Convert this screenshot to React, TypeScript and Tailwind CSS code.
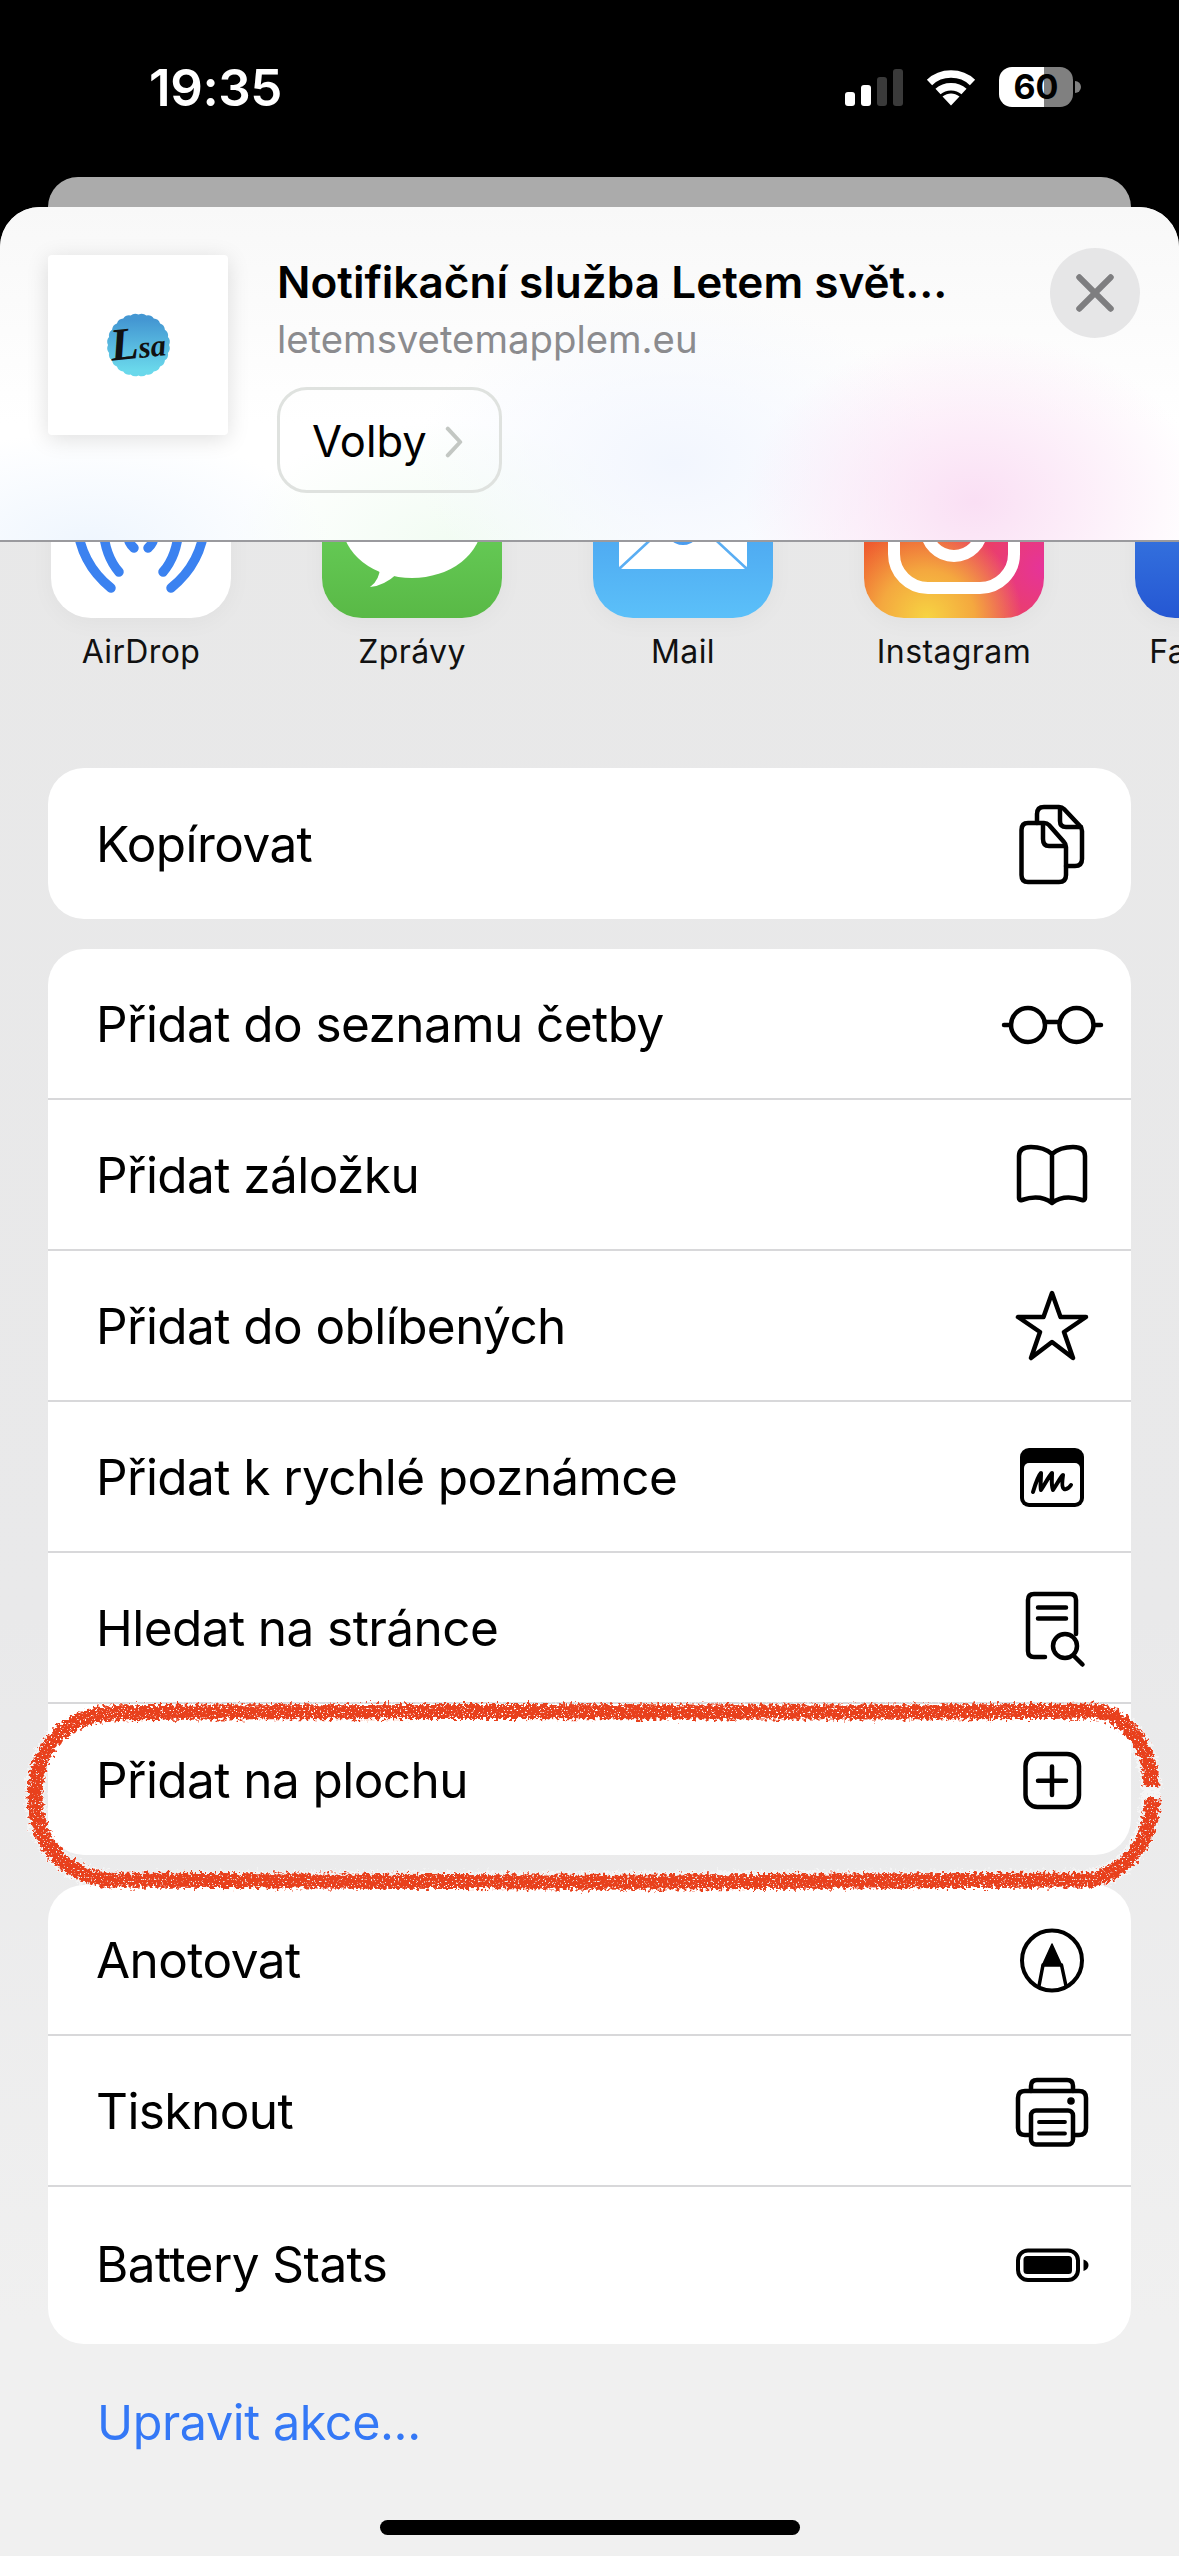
import React from "react";

const sans = "font-['Inter','Noto_Sans',sans-serif]";

function scallop(cx: number, cy: number, r: number, n: number) {
  let d = "";
  for (let i = 0; i < n; i++) {
    const a = (i / n) * Math.PI * 2;
    const b = ((i + 0.5) / n) * Math.PI * 2;
    const c = ((i + 1) / n) * Math.PI * 2;
    const p = (t: number, q: number) => `${(cx + Math.cos(t) * q).toFixed(2)} ${(cy + Math.sin(t) * q).toFixed(2)}`;
    d += (i === 0 ? `M${p(a, r)}` : "") + `Q${p(b, r + 2.4)} ${p(c, r)}`;
  }
  return d + "Z";
}

const Ico = ({ children }: { children: React.ReactNode }) => (
  <svg viewBox="0 0 80 80" className="w-[80px] h-[80px] overflow-visible shrink-0" fill="none" stroke="#000" strokeWidth="4.5" strokeLinecap="round" strokeLinejoin="round">
    {children}
  </svg>
);

const icons = {
  copy: (
    <Ico>
      <path d="M25 18V9Q25 2 32 2H47Q50 2 52 4L68 21Q70 23 70 26V54Q70 61 63 61H54" />
      <path d="M48 3V16Q48 22 54 22H69" />
      <path d="M16 18H32Q35 18 37 20L52 37Q54 39 54 42V70Q54 77 47 77H16Q9.5 77 9.5 70V25Q9.5 18 16 18Z" />
      <path d="M31 19V34Q31 41 37 41H53" />
    </Ico>
  ),
  glasses: (
    <Ico>
      <circle cx="16" cy="40" r="17" />
      <circle cx="64.5" cy="40" r="17" />
      <path d="M33 37H47.5M-8 40H-1M82 40H89" />
    </Ico>
  ),
  book: (
    <Ico>
      <path d="M40 18Q32 11 19 11Q7 11 7 20V62Q7 65 10 64Q28 58 40 67Q52 58 70 64Q73 65 73 62V20Q73 11 61 11Q48 11 40 18V67" />
    </Ico>
  ),
  star: (
    <Ico>
      <path d="M40 6L48.5 30H74L52 45L61 71L40 55L19 71L28 45L6 30H31.5Z" />
    </Ico>
  ),
  note: (
    <Ico>
      <rect x="8" y="10" width="64" height="59" rx="9" fill="#000" stroke="none" />
      <rect x="12" y="25" width="56" height="40" rx="5" fill="#fff" stroke="none" />
      <path strokeWidth="4" d="M21 54C24 44 27 37 29 35C29 42 28 48 29 52C33 46 37 38 40 35C40 42 39 47 41 52C45 46 48 40 51 37C50 44 50 50 52 51C55 52 57 50 59 47" />
    </Ico>
  ),
  search: (
    <Ico>
      <path d="M64 45V11Q64 5 58 5H22Q16 5 16 11V62Q16 68 22 68H33" />
      <path d="M26 18.5H54M26 29.5H54" />
      <circle cx="53" cy="57" r="12" />
      <path d="M62 67L70.5 75.5" />
    </Ico>
  ),
  plus: (
    <Ico>
      <rect x="13.5" y="13" width="53.5" height="53" rx="12" />
      <path d="M26 39.7H54M40 25.5V54" />
    </Ico>
  ),
  annotate: (
    <Ico>
      <circle cx="40" cy="39.5" r="30" strokeWidth="4" />
      <path d="M40 23L50 45H30Z" fill="#000" stroke="#000" strokeWidth="1.5" />
      <path strokeWidth="3.5" d="M31 44L27 65M49.5 44L54 65" />
    </Ico>
  ),
  print: (
    <Ico>
      <path d="M18 63H13Q6 63 6 56V26Q6 19 13 19H67Q74 19 74 26V56Q74 63 67 63H62" />
      <path d="M19 19V14Q19 8 25 8H55Q61 8 61 14V19" />
      <rect x="19" y="38.5" width="42" height="34" rx="5" />
      <path strokeWidth="3.8" d="M27 50H53M27 61.5H53" />
      <circle cx="59" cy="29" r="3.8" fill="#000" stroke="none" />
    </Ico>
  ),
  battery: (
    <Ico>
      <rect x="6" y="25.5" width="60" height="29.5" rx="10" strokeWidth="4" />
      <rect x="11.5" y="31" width="48.5" height="18" rx="3.5" fill="#000" stroke="none" />
      <path d="M71.5 34.5Q76.5 36 76.5 40Q76.5 44.5 71.5 46Z" fill="#000" stroke="none" />
    </Ico>
  ),
};

const Row = ({ label, icon, last, tall }: { label: string; icon: React.ReactNode; last?: boolean; tall?: boolean }) => (
  <div className={`flex items-center justify-between pl-[48px] pr-[39px] ${tall ? "h-[157px] pb-[2px]" : "h-[151px] pt-[3px]"} ${last ? "" : "border-b-2 border-[#d8d8da]"}`}>
    <span className="text-[49.5px] tracking-[-0.57px] text-black leading-none">{label}</span>
    {icon}
  </div>
);

const Group = ({ children, cls }: { children: React.ReactNode; cls: string }) => (
  <div className={`mx-[48px] bg-white rounded-[36px] overflow-hidden ${cls}`}>{children}</div>
);

const App_ = ({ label, children, cls }: { label: string; children?: React.ReactNode; cls: string }) => (
  <div className="flex flex-col items-center w-[180px] shrink-0">
    <div className={`w-[180px] h-[180px] rounded-[40px] overflow-hidden shadow-[0_4px_24px_rgba(0,0,0,0.04)] ${cls}`}>{children}</div>
    <span className="mt-[14px] text-[32px] leading-[40px] tracking-[0.4px] text-[#111] whitespace-nowrap">{label}</span>
  </div>
);

export default function App() {
  return (
    <div className={`relative w-[1179px] h-[2556px] bg-black overflow-hidden flex flex-col ${sans}`}>
      {/* status bar */}
      <div className="h-[177px] shrink-0 flex items-start justify-between pt-[62px] pl-[149px]">
        <span className="text-[51px] leading-[52px] font-semibold text-white tracking-[-0.4px]">19:35</span>
        <div className="flex items-start pt-[5px] pr-[98px]">
          <div className="flex items-end gap-[6px] h-[37px] mt-[2px]">
            <div className="w-[10px] h-[14px] rounded-[3px] bg-white" />
            <div className="w-[10px] h-[21px] rounded-[3px] bg-white" />
            <div className="w-[10px] h-[29px] rounded-[3px] bg-[#3a3a3a]" />
            <div className="w-[10px] h-[37px] rounded-[3px] bg-[#3a3a3a]" />
          </div>
          <svg viewBox="0 0 50 37" className="w-[50px] h-[37px] ml-[23px] mt-[2px]" fill="none" stroke="#fff" strokeWidth="7.5">
            <path d="M3.5 13.5C15 2.2 35 2.2 46.5 13.5" />
            <path d="M12 22.5C19 16 31 16 38 22.5" />
            <path d="M16.5 27.5L25 36.5L33.5 27.5C28 23.5 22 23.5 16.5 27.5Z" fill="#fff" stroke="none" />
          </svg>
          <div className="ml-[23px] w-[74px] h-[40px] rounded-[13px] bg-[linear-gradient(to_right,#fff_61%,#808080_61%)] flex items-center justify-center">
            <span className="text-[34px] leading-none font-bold text-black">60</span>
          </div>
          <div className="ml-[2px] mt-[14px] w-[6px] h-[12px] rounded-r-[6px] bg-[#808080]" />
        </div>
      </div>

      {/* card behind */}
      <div className="mx-[48px] h-[30px] shrink-0 rounded-t-[32px] bg-[#ababab]" />

      {/* sheet */}
      <div className="flex-1 flex flex-col rounded-t-[40px] bg-[linear-gradient(to_bottom,#e8e8e8,#e9e9ea_60%,#f0f0f0_90%)]">
        <div className="relative z-10 h-[335px] shrink-0 rounded-t-[40px] border-b-2 border-[#9a9a9e] flex items-start pt-[48px] pl-[48px] pr-[39px] bg-[radial-gradient(ellipse_230px_170px_at_975px_295px,#fadff4_0%,rgba(250,223,244,0)_100%),radial-gradient(ellipse_260px_170px_at_676px_256px,#f2f6fe_0%,rgba(242,246,254,0)_100%),radial-gradient(ellipse_240px_110px_at_90px_335px,#eff6fe_0%,rgba(239,246,254,0)_100%),radial-gradient(ellipse_220px_120px_at_450px_335px,#f2fcf3_0%,rgba(242,252,243,0)_100%),linear-gradient(to_bottom,#f8f8f8,#ffffff_65%)]">
          <div className="w-[180px] h-[180px] shrink-0 bg-white rounded-[4px] shadow-[0_4px_22px_rgba(0,0,0,0.13)] flex items-center justify-center">
            <svg viewBox="0 0 180 180" className="w-[180px] h-[180px]">
              <defs>
                <linearGradient id="lg" x1="0" y1="0" x2="0" y2="1">
                  <stop offset="0.1" stopColor="#4497d2" />
                  <stop offset="0.9" stopColor="#6ad8eb" />
                </linearGradient>
              </defs>
              <path d={scallop(90.5, 90, 30.5, 24)} fill="url(#lg)" />
              <text x="90" y="103" textAnchor="middle" fontFamily="'Liberation Serif',serif" fontStyle="italic" fontWeight="700" fontSize="31" fill="#111" transform="rotate(-6 90 90)">
                <tspan fontSize="46">L</tspan>sa
              </text>
            </svg>
          </div>
          <div className="ml-[49px] flex-1 flex flex-col items-start min-w-0">
            <span className="text-[44.1px] leading-[56px] font-semibold text-black whitespace-nowrap -mt-[1px]">Notifikační služba Letem svět...</span>
            <span className="text-[38.3px] leading-[46px] text-[#8b8b8e] mt-[6px]">letemsvetemapplem.eu</span>
            <div className="mt-[25px] w-[225px] h-[106px] rounded-[30px] border-[3px] border-[#dfe2df] flex items-center pl-[32px] pt-[3px] gap-[18px]">
              <span className="text-[43.5px] leading-none text-black">Volby</span>
              <svg viewBox="0 0 20 36" className="w-[18px] h-[32px]" fill="none" stroke="#c3c7c3" strokeWidth="4.5" strokeLinecap="round" strokeLinejoin="round">
                <path d="M3 3L17 18L3 33" />
              </svg>
            </div>
          </div>
          <div className="w-[90px] h-[90px] shrink-0 -mt-[7px] rounded-full bg-[#e6e6e7] flex items-center justify-center">
            <svg viewBox="0 0 40 40" className="w-[38px] h-[38px]" fill="none" stroke="#7e7e80" strokeWidth="6.5" strokeLinecap="round">
              <path d="M3.5 3.5L36.5 36.5M36.5 3.5L3.5 36.5" />
            </svg>
          </div>
        </div>

        {/* apps */}
        <div className="h-[330px] -mt-[104px] shrink-0 pl-[51px] flex gap-[91px] items-start">
          <App_ label="AirDrop" cls="bg-white">
            <svg viewBox="0 0 180 180" className="w-full h-full" fill="none" stroke="#3b82f0" strokeWidth="9.5" strokeLinecap="round">
              <path d="M26 85Q29 125 60 150M52 90Q54 118 68 134M76 95Q77 105 83 110" />
              <path d="M154 85Q151 125 120 150M128 90Q126 118 112 134M104 95Q103 105 97 110" />
            </svg>
          </App_>
          <App_ label="Zprávy" cls="bg-[linear-gradient(to_bottom,#72dc66,#59b946)]">
            <svg viewBox="0 0 180 180" className="w-full h-full" fill="#fff">
              <ellipse cx="90" cy="85" rx="70" ry="55" />
              <path d="M58 128Q58 142 48 149Q62 148 76 135Z" />
            </svg>
          </App_>
          <App_ label="Mail" cls="bg-[linear-gradient(to_bottom,#3f8fe8,#5bc0f9)]">
            <svg viewBox="0 0 180 180" className="w-full h-full">
              <rect x="26" y="38" width="128" height="93" rx="4" fill="#fff" />
              <path d="M26 131L68 92M154 131L112 92" stroke="#5aaef3" strokeWidth="2.5" fill="none" />
              <path d="M24 44L76 98Q90 112 104 98L156 44" stroke="#4a9df0" strokeWidth="4" fill="none" />
            </svg>
          </App_>
          <App_ label="Instagram" cls="bg-[radial-gradient(circle_95px_at_35%_100%,#f7d442_0%,#f4a83f_50%,rgba(240,130,60,0)_100%),radial-gradient(circle_120px_at_100%_72%,#e6339a_0%,#ea3f68_50%,rgba(234,63,104,0)_100%),linear-gradient(to_right,#ee5a2e,#e95050)]">
            <svg viewBox="0 0 180 180" className="w-full h-full" fill="none" stroke="#fff" strokeWidth="12">
              <rect x="30" y="30" width="120" height="120" rx="34" />
              <circle cx="90" cy="90" r="28" />
            </svg>
          </App_>
          <App_ label="Facebook" cls="bg-[linear-gradient(to_bottom,#4590ea,#2557d3)]" />
        </div>

        <Group cls="h-[151px] shrink-0">
          <Row label="Kopírovat" icon={icons.copy} last />
        </Group>
        <Group cls="mt-[30px] shrink-0">
          <Row label="Přidat do seznamu četby" icon={icons.glasses} />
          <Row label="Přidat záložku" icon={icons.book} />
          <Row label="Přidat do oblíbených" icon={icons.star} />
          <Row label="Přidat k rychlé poznámce" icon={icons.note} />
          <Row label="Hledat na stránce" icon={icons.search} />
          <Row label="Přidat na plochu" icon={icons.plus} last />
        </Group>
        <Group cls="mt-[30px] shrink-0">
          <Row label="Anotovat" icon={icons.annotate} />
          <Row label="Tisknout" icon={icons.print} />
          <Row label="Battery Stats" icon={icons.battery} last tall />
        </Group>
        <div className="pl-[97px] mt-[49px] text-[48.5px] tracking-[-0.4px] leading-[60px] text-[#3478f6]">Upravit akce...</div>
        <div className="mt-[67px] self-center w-[420px] h-[15px] rounded-full bg-black" />
      </div>

      {/* hand-drawn highlight */}
      <svg className="absolute left-0 top-[1690px] w-[1179px] h-[210px] z-20 pointer-events-none" viewBox="0 0 1179 210" fill="none">
        <defs>
          <filter id="rough" x="-5%" y="-20%" width="110%" height="140%">
            <feTurbulence type="fractalNoise" baseFrequency="0.3" numOctaves="2" seed="7" result="n" />
            <feDisplacementMap in="SourceGraphic" in2="n" scale="11" xChannelSelector="R" yChannelSelector="G" result="d" />
            <feTurbulence type="fractalNoise" baseFrequency="0.55" numOctaves="2" seed="3" result="s" />
            <feColorMatrix in="s" type="matrix" values="0 0 0 0 0  0 0 0 0 0  0 0 0 0 0  0 0 0 -9 6.6" result="m" />
            <feComposite in="d" in2="m" operator="in" />
          </filter>
        </defs>
        <path d="M110 24C400 20 800 25 1095 22C1130 27 1151 60 1151 102C1151 150 1130 180 1090 190C800 192 400 192 110 191C60 185 35 150 35 106C35 62 60 29 110 24" stroke="#fff" strokeOpacity="0.5" strokeWidth="20" filter="url(#rough)" />
        <path d="M110 23C400 19 800 24 1095 21C1130 26 1151 60 1151 97M1152 108C1152 150 1130 180 1090 190C800 193 400 193 110 190C60 184 35 150 35 106C35 62 60 28 110 23" stroke="#e8411f" strokeWidth="15" filter="url(#rough)" />
      </svg>
    </div>
  );
}
